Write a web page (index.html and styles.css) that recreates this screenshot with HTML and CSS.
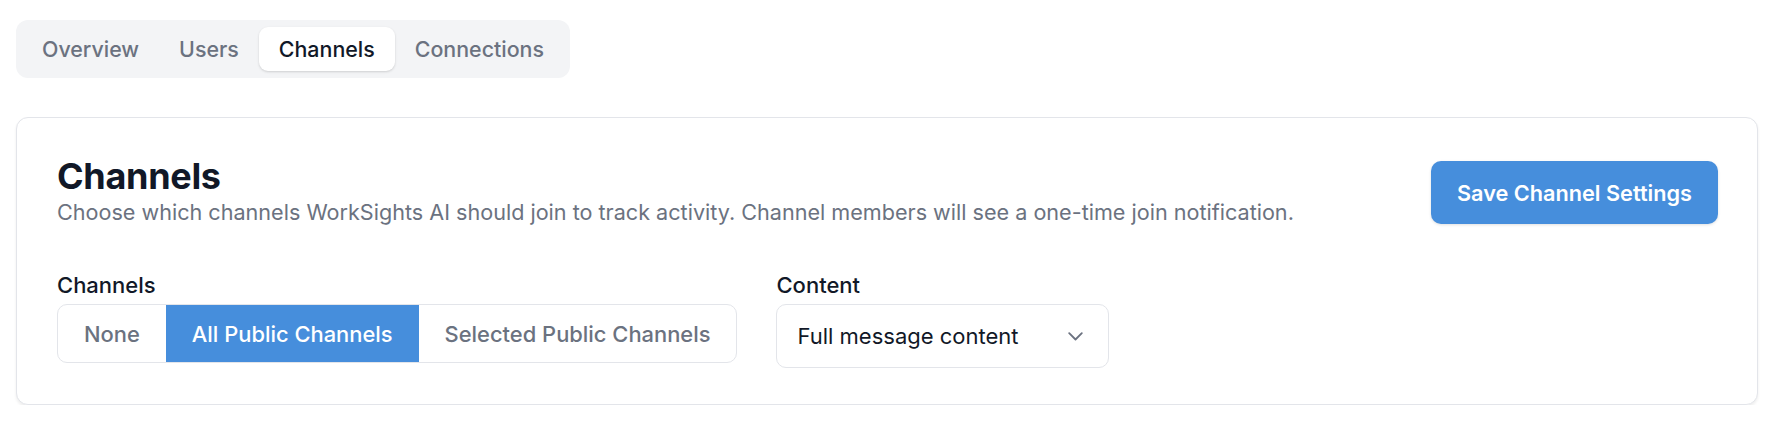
FILE: index.html
```html
<!DOCTYPE html>
<html lang="en">
<head>
<meta charset="utf-8">
<title>Channels</title>
<link rel="stylesheet" href="styles.css">
</head>
<body>
<div class="page">
  <nav class="tabs">
    <div class="tab">Overview</div>
    <div class="tab">Users</div>
    <div class="tab active">Channels</div>
    <div class="tab">Connections</div>
  </nav>

  <section class="card">
    <div class="card-header">
      <div class="titles">
        <h1 class="title">Channels</h1>
        <p class="desc">Choose which channels WorkSights AI should join to track activity. Channel members will see a one-time join notification.</p>
      </div>
      <button class="btn-primary">Save Channel Settings</button>
    </div>

    <div class="fields">
      <div class="field">
        <div class="label">Channels</div>
        <div class="segmented">
          <div class="seg">None</div>
          <div class="seg on">All Public Channels</div>
          <div class="seg">Selected Public Channels</div>
        </div>
      </div>
      <div class="field">
        <div class="label">Content</div>
        <div class="select">
          <span class="select-value">Full message content</span>
          <svg class="chev" width="15" height="9" viewBox="0 0 15 9" fill="none"><path d="M1.2 1.2 L7.5 7.5 L13.8 1.2" stroke="#6b7280" stroke-width="1.8" stroke-linecap="round" stroke-linejoin="round"/></svg>
        </div>
      </div>
    </div>
  </section>
</div>
</body>
</html>
```

FILE: styles.css
```css
* { box-sizing: border-box; }
html, body { margin: 0; padding: 0; background: #ffffff; }
body {
  font-family: Inter, "Noto Sans", "Liberation Sans", sans-serif;
  color: #111827;
}
.page {
  padding: 20px 18px 0 16px;
}
.tabs {
  display: inline-flex;
  align-items: center;
  background: #f3f4f6;
  border-radius: 12px;
  padding: 7px 6px;
}
.tab {
  height: 44px;
  display: flex;
  align-items: center;
  padding: 0 20px;
  font-size: 21.4px;
  font-weight: 500;
  color: #6b7280;
  border-radius: 9px;
}
.tab.active {
  background: #ffffff;
  color: #111827;
  box-shadow: 0 1px 3px rgba(0,0,0,0.10), 0 1px 2px rgba(0,0,0,0.06);
}
.card {
  margin-top: 39px;
  border: 1px solid #e3e5ea;
  border-radius: 12px;
  background: #ffffff;
  box-shadow: 0 2px 3px rgba(0,0,0,0.07);
  padding: 40px 39px 36px 40px;
}
.card-header {
  display: flex;
  align-items: center;
  justify-content: space-between;
}
.title {
  margin: 0;
  font-size: 36px;
  line-height: 36px;
  font-weight: 700;
  letter-spacing: -0.3px;
  color: #111827;
}
.desc {
  margin: 3px 0 0 0;
  font-size: 21.6px;
  line-height: 30px;
  color: #6b7280;
}
.btn-primary {
  height: 63px;
  padding: 0 26px;
  border: none;
  border-radius: 10px;
  background: #468edc;
  color: #ffffff;
  font-family: inherit;
  font-size: 21.7px;
  font-weight: 600;
  box-shadow: 0 1px 3px rgba(0,0,0,0.12);
}
.fields {
  display: flex;
  align-items: flex-start;
  gap: 39px;
  margin-top: 43px;
}
.field {
  display: flex;
  flex-direction: column;
  gap: 4px;
}
.label {
  font-size: 22px;
  line-height: 30px;
  font-weight: 500;
  color: #111827;
}
.segmented {
  display: flex;
  height: 59px;
  border: 1px solid #e3e5ea;
  border-radius: 10px;
  overflow: hidden;
}
.seg {
  display: flex;
  align-items: center;
  padding: 0 26px;
  font-size: 21.9px;
  font-weight: 500;
  color: #6b7280;
}
.seg.on {
  background: #468edc;
  color: #ffffff;
}
.select {
  width: 333px;
  height: 64px;
  display: flex;
  align-items: center;
  justify-content: space-between;
  padding: 0 25px 0 20px;
  border: 1px solid #e3e5ea;
  border-radius: 10px;
}
.select-value {
  font-size: 22px;
  color: #111827;
}
.chev { display: block; }
```
